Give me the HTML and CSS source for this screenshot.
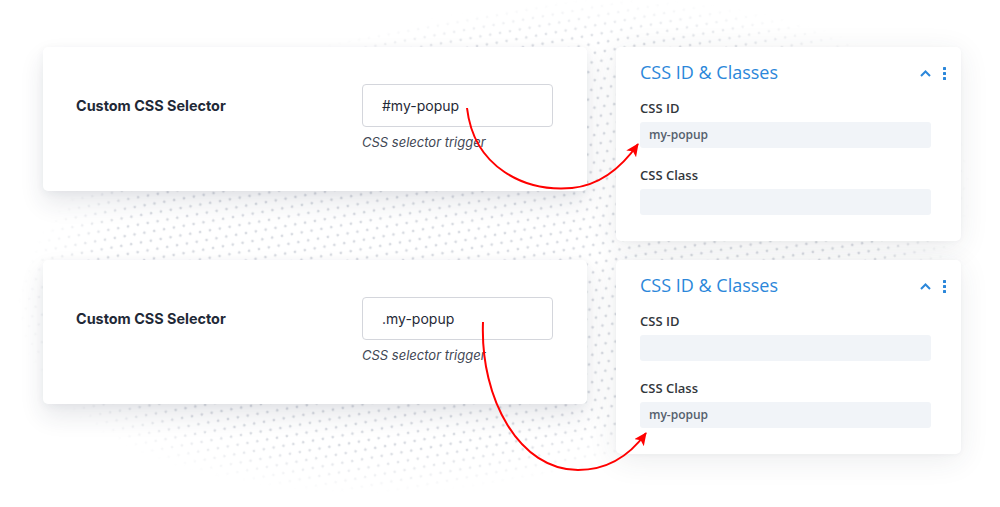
FILE: index.html
```html
<!DOCTYPE html>
<html lang="en">
<head>
<meta charset="utf-8">
<title>CSS Selector Trigger</title>
<link rel="stylesheet" href="styles.css">
</head>
<body>
<div class="page">
  <div class="dots"></div>
  <main class="stage">
    <section class="setting-card">
      <div class="setting-label">Custom CSS Selector</div>
      <div class="setting-control">
        <div class="text-input">#my-popup</div>
        <div class="help">CSS selector trigger</div>
      </div>
    </section>
    <section class="panel">
      <header class="panel-head">
        <h2 class="panel-title">CSS ID &amp; Classes</h2>
        <div class="panel-icons">
          <svg class="chev" width="11" height="7" viewBox="0 0 11 7"><polyline points="1,6 5.5,1.5 10,6" fill="none" stroke="#2b87da" stroke-width="2"/></svg>
          <span class="kebab"><i></i><i></i><i></i></span>
        </div>
      </header>
      <div class="field-label">CSS ID</div>
      <div class="field">my-popup</div>
      <div class="field-label">CSS Class</div>
      <div class="field"></div>
    </section>
    <section class="setting-card">
      <div class="setting-label">Custom CSS Selector</div>
      <div class="setting-control">
        <div class="text-input">.my-popup</div>
        <div class="help">CSS selector trigger</div>
      </div>
    </section>
    <section class="panel">
      <header class="panel-head">
        <h2 class="panel-title">CSS ID &amp; Classes</h2>
        <div class="panel-icons">
          <svg class="chev" width="11" height="7" viewBox="0 0 11 7"><polyline points="1,6 5.5,1.5 10,6" fill="none" stroke="#2b87da" stroke-width="2"/></svg>
          <span class="kebab"><i></i><i></i><i></i></span>
        </div>
      </header>
      <div class="field-label">CSS ID</div>
      <div class="field"></div>
      <div class="field-label">CSS Class</div>
      <div class="field">my-popup</div>
    </section>
  </main>
  <svg class="arrows" width="1000" height="507" viewBox="0 0 1000 507">
    <defs>
      <marker id="head" markerUnits="userSpaceOnUse" markerWidth="14" markerHeight="12" refX="12" refY="6" orient="auto">
        <path d="M0,0 L13,6 L0,12 L3,6 Z" fill="#ff0000"/>
      </marker>
    </defs>
    <path d="M467 108 C 474 168, 525 192, 572 188 C 602 185, 624 164, 638 144" fill="none" stroke="#ff0000" stroke-width="2" marker-end="url(#head)"/>
    <path d="M483 322 C 480 400, 520 470, 578 470 C 608 470, 630 455, 646 433" fill="none" stroke="#ff0000" stroke-width="2" marker-end="url(#head)"/>
  </svg>
</div>
</body>
</html>
```

FILE: styles.css
```css
html, body {
  margin: 0;
  padding: 0;
  background: #ffffff;
}

.page {
  position: relative;
  width: 1000px;
  height: 507px;
  overflow: hidden;
  background: #ffffff;
}

.dots {
  position: absolute;
  left: 12px;
  top: 10px;
  width: 966px;
  height: 472px;
  border-radius: 50%;
  transform: rotate(-10deg);
  background-image:
    radial-gradient(circle, #d9dce2 1.2px, transparent 1.7px),
    radial-gradient(circle, #d9dce2 1.2px, transparent 1.7px);
  background-size: 10px 18px, 10px 18px;
  background-position: 0 0, 5px 9px;
  -webkit-mask-image: radial-gradient(closest-side, #000 82%, transparent 100%);
  mask-image: radial-gradient(closest-side, #000 82%, transparent 100%);
}

.stage {
  position: relative;
  display: grid;
  grid-template-columns: 544px 345px;
  column-gap: 29px;
  row-gap: 19px;
  align-items: start;
  padding: 47px 0 0 43px;
}

/* Left setting cards */
.setting-card {
  box-sizing: border-box;
  height: 144px;
  background: #ffffff;
  border-radius: 5px;
  box-shadow: 0 12px 24px rgba(40, 50, 70, 0.11), 0 2px 8px rgba(40, 50, 70, 0.05);
  display: flex;
  align-items: flex-start;
  padding: 37px 34px 0 33px;
  font-family: Inter, "Liberation Sans", sans-serif;
}

.setting-label {
  flex: 1;
  height: 43px;
  line-height: 43px;
  font-size: 14.4px;
  font-weight: 700;
  color: #1f2937;
}

.setting-control {
  width: 191px;
  display: flex;
  flex-direction: column;
}

.text-input {
  box-sizing: border-box;
  height: 43px;
  border: 1px solid #d4d6dc;
  border-radius: 4px;
  padding: 0 0 0 19px;
  line-height: 41px;
  font-size: 14px;
  color: #1f2937;
}

.help {
  margin-top: 7px;
  font-size: 13px;
  line-height: 16px;
  font-style: italic;
  color: #3f4754;
}

/* Right panels */
.panel {
  box-sizing: border-box;
  height: 194px;
  background: #ffffff;
  border-radius: 5px;
  box-shadow: 0 6px 30px rgba(40, 50, 70, 0.09), 0 1px 4px rgba(40, 50, 70, 0.04);
  padding: 13px 15px 25px 24px;
  font-family: "Open Sans", "Liberation Sans", sans-serif;
}

.panel-head {
  display: flex;
  align-items: center;
  justify-content: space-between;
  height: 24px;
  margin-bottom: 15px;
}

.panel-title {
  margin: 0;
  font-size: 18px;
  line-height: 24px;
  font-weight: 400;
  color: #2b87da;
}

.panel-icons {
  display: flex;
  align-items: center;
  gap: 12px;
  padding-top: 2px;
}

.chev {
  display: block;
}

.kebab {
  display: flex;
  flex-direction: column;
  gap: 2px;
}

.kebab i {
  display: block;
  width: 3px;
  height: 3px;
  border-radius: 0.5px;
  background: #2b87da;
}

.field-label {
  font-size: 13px;
  line-height: 18px;
  font-weight: 600;
  color: #32373c;
  margin-bottom: 5px;
}

.field {
  box-sizing: border-box;
  height: 26px;
  margin-right: 15px;
  margin-bottom: 18px;
  background: #f1f4f8;
  border-radius: 3px;
  padding-left: 9px;
  font-size: 12px;
  line-height: 26px;
  font-weight: 600;
  color: #555f6d;
}

.field:last-child {
  margin-bottom: 0;
}

.arrows {
  position: absolute;
  left: 0;
  top: 0;
  pointer-events: none;
}
```
